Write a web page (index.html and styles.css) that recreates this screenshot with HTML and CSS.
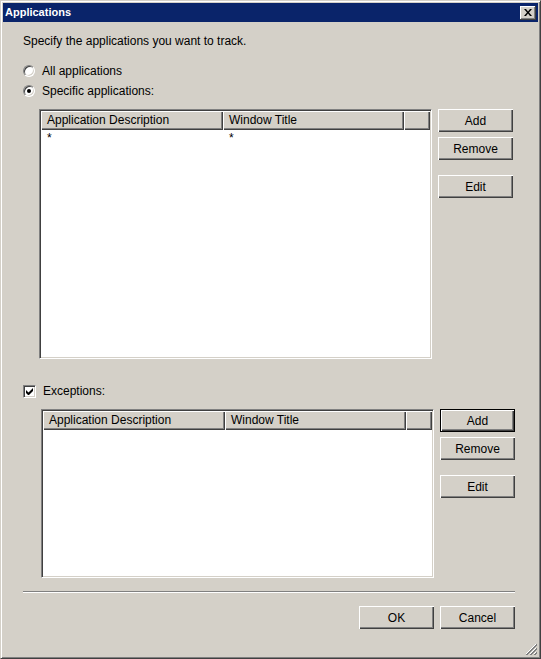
FILE: index.html
```html
<!DOCTYPE html>
<html>
<head>
<meta charset="utf-8">
<title>Applications</title>
<link rel="stylesheet" href="styles.css">
</head>
<body>
<div class="window">
  <div class="titlebar">
    <span class="title">Applications</span>
    <span class="close"><svg width="8" height="7" viewBox="0 0 8 7"><path d="M0 0h2l2 2.5L6 0h2L5 3.5 8 7H6L4 4.5 2 7H0l3-3.5z" fill="#000"/></svg></span>
  </div>
  <div class="body">
    <p class="intro">Specify the applications you want to track.</p>
    <div class="radios">
      <div class="opt"><span class="radio"></span><span>All applications</span></div>
      <div class="opt"><span class="radio on"></span><span>Specific applications:</span></div>
    </div>
    <div class="group g1">
      <div class="list l1">
        <div class="lhead">
          <div class="hc c1">Application Description</div>
          <div class="hc c2">Window Title</div>
          <div class="hc c3"></div>
        </div>
        <div class="lrow"><span class="c1">*</span><span class="c2">*</span></div>
      </div>
      <div class="btns">
        <div class="btn">Add</div>
        <div class="btn">Remove</div>
        <div class="btn edit">Edit</div>
      </div>
    </div>
    <div class="opt check"><span class="checkbox"><svg width="7" height="7" viewBox="0 0 7 7"><path d="M0 2v3l2 2h1l4-4V0L2.5 4.5z" fill="#000"/></svg></span><span>Exceptions:</span></div>
    <div class="group g2">
      <div class="list l2">
        <div class="lhead">
          <div class="hc c1">Application Description</div>
          <div class="hc c2">Window Title</div>
          <div class="hc c3"></div>
        </div>
      </div>
      <div class="btns">
        <div class="btn default">Add</div>
        <div class="btn">Remove</div>
        <div class="btn edit">Edit</div>
      </div>
    </div>
    <div class="sep"></div>
    <div class="footer">
      <div class="btn">OK</div>
      <div class="btn">Cancel</div>
    </div>
  </div>
  <svg class="grip" width="12" height="12" viewBox="0 0 12 12">
    <path d="M11 1L1 11M11 5L5 11M11 9L9 11" stroke="#fff" stroke-width="1"/>
    <path d="M12 1L1 12M12 2L2 12M12 5L5 12M12 6L6 12M12 9L9 12M12 10L10 12" stroke="#808080" stroke-width="1"/>
  </svg>
</div>
</body>
</html>
```
FILE: styles.css
```css
* { box-sizing: border-box; }
html, body { margin: 0; padding: 0; }
body {
  width: 541px;
  height: 659px;
  background: #d4d0c8;
  font-family: "Liberation Sans", Arial, sans-serif;
  font-size: 12px;
  color: #000;
  overflow: hidden;
}
.window {
  position: relative;
  width: 541px;
  height: 659px;
  border: 1px solid;
  border-color: #d4d0c8 #404040 #404040 #d4d0c8;
  box-shadow: inset 1px 1px #fff, inset -1px -1px #808080;
  padding: 2px;
  display: flex;
  flex-direction: column;
}
.titlebar {
  height: 19px;
  background: #0a246a;
  color: #fff;
  display: flex;
  align-items: center;
  justify-content: space-between;
  padding: 0 2px 0 2px;
  font-weight: bold;
  font-size: 11px;
}
.title { line-height: 19px; }
.close {
  width: 16px;
  height: 14px;
  background: #d4d0c8;
  box-shadow: inset -1px -1px #404040, inset 1px 1px #fff, inset -2px -2px #808080;
  display: flex;
  align-items: center;
  justify-content: center;
  padding-bottom: 1px;
}
.close svg { display: block; }
.body {
  flex: 1;
  padding: 12px 23px 0 20px;
  display: flex;
  flex-direction: column;
}
.intro { margin: 0; line-height: 14px; height: 14px; }
.radios { margin-top: 16px; display: flex; flex-direction: column; gap: 6px; }
.opt { display: flex; align-items: center; height: 14px; gap: 7px; line-height: 14px; }
.radio {
  position: relative;
  width: 12px;
  height: 12px;
  border-radius: 50%;
  background: #fff;
  border: 1px solid;
  border-color: #808080 #fff #fff #808080;
  box-shadow: inset 1px 1px #404040, inset -1px -1px #d4d0c8;
}
.radio.on::after {
  content: "";
  position: absolute;
  left: 3px;
  top: 3px;
  width: 4px;
  height: 4px;
  border-radius: 50%;
  background: #000;
}
.group { display: flex; gap: 6px; }
.g1 { margin-top: 11px; margin-left: 16px; }
.g2 { margin-top: 11px; margin-left: 18px; }
.list {
  width: 393px;
  background: #fff;
  border: 1px solid;
  border-color: #808080 #fff #fff #808080;
  box-shadow: inset 1px 1px #404040, inset -1px -1px #d4d0c8;
  padding: 1px;
}
.l1 { height: 250px; }
.l2 { height: 169px; }
.lhead { display: flex; height: 19px; }
.hc {
  background: #d4d0c8;
  box-shadow: inset 1px 1px #fff, inset -1px -1px #404040, inset -2px -2px #808080;
  padding-left: 6px;
  line-height: 18px;
  white-space: nowrap;
}
.hc.c1 { width: 182px; }
.hc.c2 { width: 181px; }
.hc.c3 { flex: 1; }
.lrow { display: flex; height: 15px; line-height: 15px; padding-top: 1px; }
.lrow .c1 { width: 182px; padding-left: 6px; }
.lrow .c2 { padding-left: 6px; }
.btns { display: flex; flex-direction: column; gap: 5px; }
.btn {
  width: 75px;
  height: 23px;
  background: #d4d0c8;
  box-shadow: inset 1px 1px #fff, inset -1px -1px #404040, inset -2px -2px #808080;
  display: flex;
  align-items: center;
  justify-content: center;
  line-height: 14px;
}
.btn.edit { margin-top: 10px; }
.btn.default {
  border: 1px solid #000;
}
.check { margin-top: 25px; }
.checkbox {
  width: 13px;
  height: 13px;
  background: #fff;
  border: 1px solid;
  border-color: #808080 #fff #fff #808080;
  box-shadow: inset 1px 1px #404040, inset -1px -1px #d4d0c8;
  display: flex;
  align-items: center;
  justify-content: center;
}
.checkbox svg { display: block; }
.sep {
  margin-top: 13px;
  height: 2px;
  border-top: 1px solid #808080;
  border-bottom: 1px solid #fff;
}
.footer {
  margin-top: 13px;
  display: flex;
  justify-content: flex-end;
  gap: 6px;
}
.grip { position: absolute; right: 3px; bottom: 3px; }
```
